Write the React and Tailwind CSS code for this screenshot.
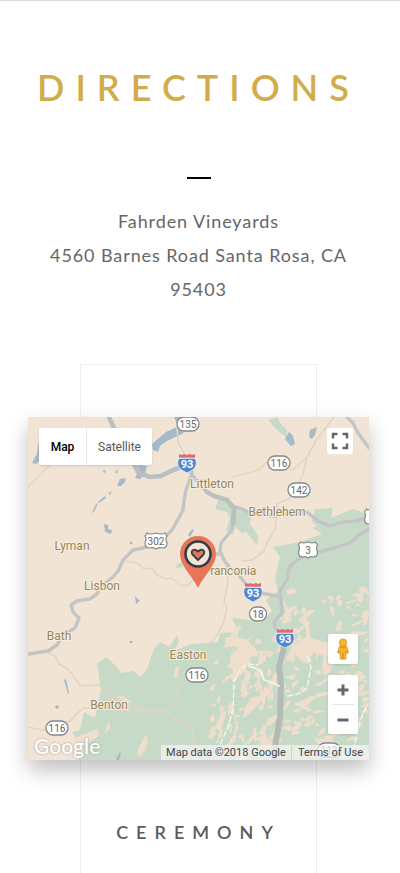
const ROADS = {
  minor: [
    "M0 70 L22 48 L34 40",
    "M205 60 L224 55 L232 52 L238 46 L248 43 M262 53 L266 52 L279 40 L289 22 L300 8 L306 0",
    "M279 40 L275 58 L262 81 L249 87 L247 112 L238 128 L236 134 L224 143 L214 144",
    "M97 144 L110 146 L116 152 L124 151 L129 158 L138 162 L144 161 L154 169 L160 168 L166 162",
    "M198 148 L200 165 L196 185 L199 192 L195 207 L188 220 L178 230",
    "M20 236 L27 239 L31 247 L41 253 L53 269 L70 268 L79 275 L90 282 L108 290 L118 293",
    "M0 310 L14 313 L30 312 L43 303 L55 291 L68 291 L100 294 L136 294 L147 281 L151 268 L170 261",
    "M136 294 L151 304 L164 313 L167 330 L166 343",
    "M149 10 L150 25 L157 38",
  ],
  major: [
    "M80 -2 L85 9 L92 27 L105 46 L111 56 L122 60 L133 59 L143 54 L153 50 L160 47",
    "M163 51 L164 57 L158 73 L156 84 L155 93 L149 104 L144 113 L139 118 L129 126 L115 131 L105 133 L95 143 L90 154 L85 160 L72 170 L69 177 L62 182 L49 184 L43 188 L45 195 L51 201 L47 211 L35 218 L29 228 L20 234 L0 237",
    "M163 56 L171 67 L179 75 L186 79 L199 83 L205 89 L214 92 L225 97 L245 99 L279 95 L290 104 L302 109 L315 105 L327 104 L341 101",
    "M206 91 L206 104 L203 114 L193 126 L192 134 L196 143 L202 151 L210 157 L218 167 L224 175 L239 177 L252 180",
    "M193 137 L182 137",
    "M341 112 L331 118 L322 126 L306 131 L290 135 L274 140 L263 148 L260 155 L260 161 L252 174 L253 182 L254 196 L246 205 L248 212 L257 221",
    "M319 0 L325 6 L330 16 L341 31",
  ],
};

const GREENS = [
  "M240 3 L249 0 L253 7 L259 13 L259 21 L250 14 Z",
  "M191 82 L187 92 L199 95 L202 101 L198 113 L205 118 L207 110 L214 116 L218 115 L229 128 L230 118 L222 107 L223 98 L212 91 L205 88 L199 86 Z",
  "M283 110 L305 111 L316 106 L341 106 L341 343 L50 343 L56 333 L49 323 L44 315 L52 313 L56 295 L67 301 L73 273 L69 246 L78 240 L89 250 L93 256 L105 254 L113 260 L119 252 L126 232 L132 225 L148 233 L164 227 L190 225 L192 216 L211 215 L204 201 L222 203 L232 206 L244 194 L238 183 L250 174 L247 162 L252 140 L245 130 L272 125 L294 117 Z",
  "M284 104 L287 92 L305 91 L303 101 L315 96 L325 92 L341 98 L341 112 L290 112 Z",
  "M147 149 L154 145 L155 150 L149 151 Z",
  "M141 231 L149 218 L151 224 L146 234 Z",
];

const CLEARINGS = [
  "M44 322 L69 312 L72 318 L55 329 Z",
  "M78 311 L81 304 L82 311 L77 317 Z",
  "M111 330 L118 317 L120 326 L113 340 L109 337 Z",
  "M146 261 L147 250 L151 250 L150 260 Z",
  "M88 281 L94 278 L105 286 L96 285 Z",
  "M202 240 L211 231 L222 237 L218 254 L208 262 L203 250 Z",
  "M258 174 L265 171 L270 175 L260 178 Z",
  "M198 220 L218 222 L230 235 L220 243 L208 229 L196 231 Z",
  "M217 290 L224 280 L232 279 L238 268 L240 277 L232 286 L222 296 L215 302 Z",
  "M262 231 L278 220 L300 226 L300 240 L286 236 L276 246 L268 239 Z",
];

const WATER = [
  "M124 27 L138 15 L149 10 L156 16 L139 24 L132 29 L130 35 L125 33 Z",
  "M146 0 L153 0 L155 4 L149 7 Z",
  "M4 46 L9 37 L10 27 L14 26 L13 43 L8 47 Z",
  "M111 53 L110 48 L119 49 L117 57 L112 62 L107 61 Z",
  "M89 69 L92 62 L98 61 L97 65 L93 69 Z",
  "M74 54 L78 53 L77 56 Z M87 55 L90 52 L89 57 Z",
  "M64 96 L68 87 L70 86 L66 95 Z M70 85 L77 79 L78 81 L71 86 Z M80 76 L84 74 L82 78 Z",
  "M76 107 L80 108 L80 112 L84 113 L83 117 L77 115 Z",
  "M257 22 L261 15 L265 19 L267 27 L263 29 Z",
  "M282 13 L289 10 L287 18 L284 22 L281 20 Z",
  "M107 179 L112 184 L108 187 Z",
  "M36 263 L38 262 L41 276 L40 277 Z",
  "M88 343 L91 336 L93 336 L91 343 Z",
  "M160 118 L164 112 L166 113 L162 120 Z",
];

function terrain() {
  let seed = 97;
  const next = () => {
    seed = (seed * 16807) % 2147483647;
    return seed / 2147483647;
  };
  const shapes = [];
  for (let i = 0; i < 330; i++) {
    const x = 184 + next() * 156;
    const y = 168 + next() * 176;
    const length = 2 + next() * next() * 11;
    const girth = 1.2 + next() * 1.8;
    const left = x < 252;
    const angle = left ? -1.9 + next() * 1.3 : y > 250 ? -0.9 + next() * 0.9 : -2 + next() * 1.9;
    const inside = y > 192 - (x - 260) * 0.3 && !(x < 205 && y < 240) && !(x < 245 && y < 212);
    if (!inside) continue;
    const points = [];
    for (let k = 0; k < 8; k++) {
      const turn = (k / 8) * Math.PI * 2;
      const wobble = 0.6 + next() * 0.7;
      const along = Math.cos(turn) * length * wobble;
      const across = Math.sin(turn) * girth * wobble + Math.sin(along) * 0.9;
      const px = x + along * Math.cos(angle) - across * Math.sin(angle);
      const py = y + along * Math.sin(angle) + across * Math.cos(angle);
      points.push(`${px.toFixed(1)} ${py.toFixed(1)}`);
    }
    shapes.push(`M${points.join(" L")} Z`);
  }
  return shapes.join(" ");
}

const TERRAIN = terrain();

const TOWNS = [
  ["Littleton", 184, 71],
  ["Bethlehem", 249, 99],
  ["Lyman", 44, 133],
  ["Lisbon", 74, 173],
  ["Bath", 31, 223],
  ["Franconia", 202, 158],
  ["Easton", 160, 242],
  ["Benton", 81, 292],
];

const ROUTES = [
  ["135", 160, 7],
  ["116", 251, 46],
  ["142", 271, 73],
  ["18", 230, 197],
  ["116", 169, 258],
  ["116", 29, 311],
  ["112", 301, 333],
];

function Route({ label, x, y }) {
  const w = label.length > 2 ? 22 : 17;
  return (
    <g transform={`translate(${x} ${y})`}>
      <rect x={-w / 2} y="-7" width={w} height="14" rx="7" fill="#fff" stroke="#85888a" strokeWidth="1.3" />
      <text y="4" textAnchor="middle" fontSize="10" fill="#666">{label}</text>
    </g>
  );
}

function UsRoute({ label, x, y, w }) {
  const h = w / 2;
  return (
    <g transform={`translate(${x} ${y})`}>
      <path
        d={`M${-h + 2} -8 Q${-h / 2} -6 0 -8 Q${h / 2} -6 ${h - 2} -8 L${h} -5 Q${h - 2} -2 ${h} 2 Q${h} 7 ${h - 4} 7 Q3 6 0 8 Q-3 6 ${-h + 4} 7 Q${-h} 7 ${-h} 2 Q${-h + 2} -2 ${-h} -5 Z`}
        fill="#fff" stroke="#85888a" strokeWidth="1.2"
      />
      <text y="4" textAnchor="middle" fontSize="10" fill="#666">{label}</text>
    </g>
  );
}

function Interstate({ x, y }) {
  return (
    <g transform={`translate(${x} ${y})`}>
      <path d="M-8 -5 H8 Q11 1 7 6 Q4 8 0 10 Q-4 8 -7 6 Q-11 1 -8 -5 Z" fill="#4e88d4" stroke="#f4eee6" strokeWidth="0.8" />
      <path d="M-8 -5 V-9 L-5 -8 L-3 -9 L0 -8 L3 -9 L5 -8 L8 -9 V-5 Z" fill="#df6b70" />
      <path d="M-9 -4.8 H9" stroke="#fff" strokeWidth="0.8" />
      <text y="5" textAnchor="middle" fontSize="11" fontWeight="700" fill="#fff">93</text>
    </g>
  );
}

function MapCanvas() {
  return (
    <svg
      viewBox="0 0 341 343"
      preserveAspectRatio="xMidYMid slice"
      className="block h-full w-full font-['Roboto',sans-serif]"
      role="img"
      aria-label="Map of the area around Franconia"
    >
      <rect width="341" height="343" fill="#f2e4d5" />
      <path d={GREENS.join(" ")} fill="#c6dac7" />
      <path d={CLEARINGS.join(" ")} fill="#f0decd" />
      <path d={TERRAIN} fill="#f0decd" />
      <path d={WATER.join(" ")} fill="#a5bac9" />
      <circle cx="29" cy="290" r="1.8" fill="#a9b3c1" />
      <circle cx="103" cy="126" r="1.3" fill="#a9b3b8" />
      <circle cx="103" cy="225" r="1.3" fill="#a9b3b8" />
      <g fill="none" strokeLinejoin="round" strokeLinecap="round">
        <path d={ROADS.minor.join(" ")} stroke="#e2d4c4" strokeWidth="1.6" />
        <path d={ROADS.major.join(" ")} stroke="#c3c5c5" strokeWidth="3.4" />
        <path d="M80 -2 L85 9 L92 27 L105 46 L111 56 L122 60 L133 59 L143 54 L160 47 M179 75 L186 79 L199 83 L206 91 L205 107" stroke="#bbbfbf" strokeWidth="4.6" />
        <path d="M257 220 L255 235 L251 250 L253 268 L252 300 L247 330 L246 345" stroke="#b4bbb7" strokeWidth="6" />
        <path d="M206 265 L212 252 L220 247 L230 248 M206 268 L205 292 L200 310 L191 330 M260 279 L270 277 L279 271 L283 250 L279 237 M338 290 L332 304 L326 330" stroke="#f3f5ea" strokeWidth="1.5" strokeDasharray="5 3" />
        <path d="M221 249 L232 253 L236 263 L243 265 L251 269" stroke="#f3f5ea" strokeWidth="1.8" />
      </g>
      <g fontSize="12" fill="#98845c" stroke="#f7eee2" strokeWidth="2" strokeLinejoin="round" paintOrder="stroke" textAnchor="middle">
        {TOWNS.map(([name, x, y]) => (
          <text key={name} x={x} y={y}>{name}</text>
        ))}
      </g>
      {ROUTES.map(([label, x, y]) => (
        <Route key={`${label}-${x}`} label={label} x={x} y={y} />
      ))}
      <UsRoute label="302" x={128} y={124} w={22} />
      <UsRoute label="3" x={280} y={133} w={19} />
      <UsRoute label="" x={346} y={100} w={19} />
      <Interstate x={159} y={46} />
      <Interstate x={225} y={175} />
      <Interstate x={257} y={221} />
      <path d="M170 171 C164 158 152 149 152 137 A18 18 0 0 1 188 137 C188 149 176 158 170 171 Z" fill="#e87558" />
      <circle cx="170" cy="137" r="12.5" fill="#f3e5d6" stroke="#343d46" strokeWidth="2.6" />
      <path d="M170 143 L164.500 137.500 C162 134 166 130.500 170 134.500 C174 130.500 178 134 175.500 137.500 Z" fill="#e87558" stroke="#343d46" strokeWidth="1.8" strokeLinejoin="round" />
    </svg>
  );
}

function Pegman() {
  return (
    <svg viewBox="0 0 16 24" className="h-[22px] w-4" aria-hidden="true">
      <path d="M4 9 Q8 6 12 9 L14 16 L12 17 L11 14 L11 23 H5 L5 14 L4 17 L2 16 Z" fill="#f7b52c" stroke="#d98b20" strokeWidth="0.8" />
      <path d="M8 16 V23 M5 9 L8 11 L11 9" fill="none" stroke="#c9801b" strokeWidth="1" />
      <circle cx="8" cy="5" r="4" fill="#f7b52c" stroke="#d98b20" strokeWidth="0.8" />
    </svg>
  );
}

export default function App() {
  return (
    <main className="min-h-screen border-t border-[#dcdcdc] bg-white pr-[31px] pl-7 text-center font-['Lato','Open_Sans',sans-serif] text-[#666]">
      <h1 className="-mx-4 pt-16 text-4xl leading-[44px] font-semibold tracking-[11px] text-[#d2ac4b]">DIRECTIONS</h1>
      <hr className="mx-auto mt-[68px] h-[2px] w-6 border-0 bg-black" />
      <address className="mt-[25px] text-lg leading-[34px] tracking-wider not-italic">
        Fahrden Vineyards
        <br />
        4560 Barnes Road Santa Rosa, CA 95403
      </address>

      <section className="mx-[52px] mt-[58px] h-[520px] border border-[#eee] pt-[52px]">
        <div className="relative -mx-[53px] h-[343px] shadow-[0_10px_20px_rgba(0,0,0,0.25)]">
          <div className="h-full overflow-hidden">
            <MapCanvas />
          </div>
          <div className="absolute top-[11px] left-[11px] flex h-[37px] rounded-xs bg-white font-['Roboto',sans-serif] text-xs shadow-sm">
            <button type="button" className="w-12 border-r border-[#e5e5e5] font-medium text-black">Map</button>
            <button type="button" className="w-[65px] text-[#565656]">Satellite</button>
          </div>
          <button type="button" aria-label="Toggle fullscreen" className="absolute top-[11px] right-4 flex size-[26px] items-center justify-center rounded-xs bg-white">
            <svg viewBox="0 0 18 18" className="size-[18px]" fill="none" stroke="#666" strokeWidth="2.4" aria-hidden="true">
              <path d="M2 6.500 V2 H6.500 M11.500 2 H16 V6.500 M16 11.500 V16 H11.500 M6.500 16 H2 V11.500" />
            </svg>
          </button>
          <div className="absolute right-[11px] bottom-[26px] flex w-[30px] flex-col gap-[11px]">
            <button type="button" aria-label="Street View" className="flex h-[30px] items-center justify-center rounded-xs bg-white shadow-sm">
              <Pegman />
            </button>
            <div className="flex flex-col rounded-xs bg-white px-1 shadow-sm">
              <button type="button" aria-label="Zoom in" className="flex h-[30px] items-center justify-center border-b border-[#e6e6e6]">
                <svg viewBox="0 0 12 12" className="size-3" stroke="#666" strokeWidth="3" aria-hidden="true"><path d="M6 0.500 V11.500 M0.500 6 H11.500" /></svg>
              </button>
              <button type="button" aria-label="Zoom out" className="flex h-[29px] items-center justify-center">
                <svg viewBox="0 0 12 12" className="size-3" stroke="#666" strokeWidth="3" aria-hidden="true"><path d="M0.500 6 H11.500" /></svg>
              </button>
            </div>
          </div>
          <a href="#google" className="absolute bottom-0 left-[6px] text-[21px] leading-7 font-semibold text-white [text-shadow:0_0_2px_#8a8a8a]">Google</a>
          <div className="absolute right-0 bottom-0 flex h-[15px] gap-px font-['Roboto',sans-serif] text-[11px] leading-[15px] text-[#444]">
            <span className="bg-[#f5f5f5]/70 px-[5px]">Map data ©2018 Google</span>
            <a href="#terms" className="bg-[#f5f5f5]/70 px-[6px]">Terms of Use</a>
          </div>
        </div>
        <h2 className="-mx-4 mt-[60px] text-lg leading-6 font-semibold tracking-[8px] text-[#5c5c5c]">CEREMONY</h2>
      </section>
    </main>
  );
}
